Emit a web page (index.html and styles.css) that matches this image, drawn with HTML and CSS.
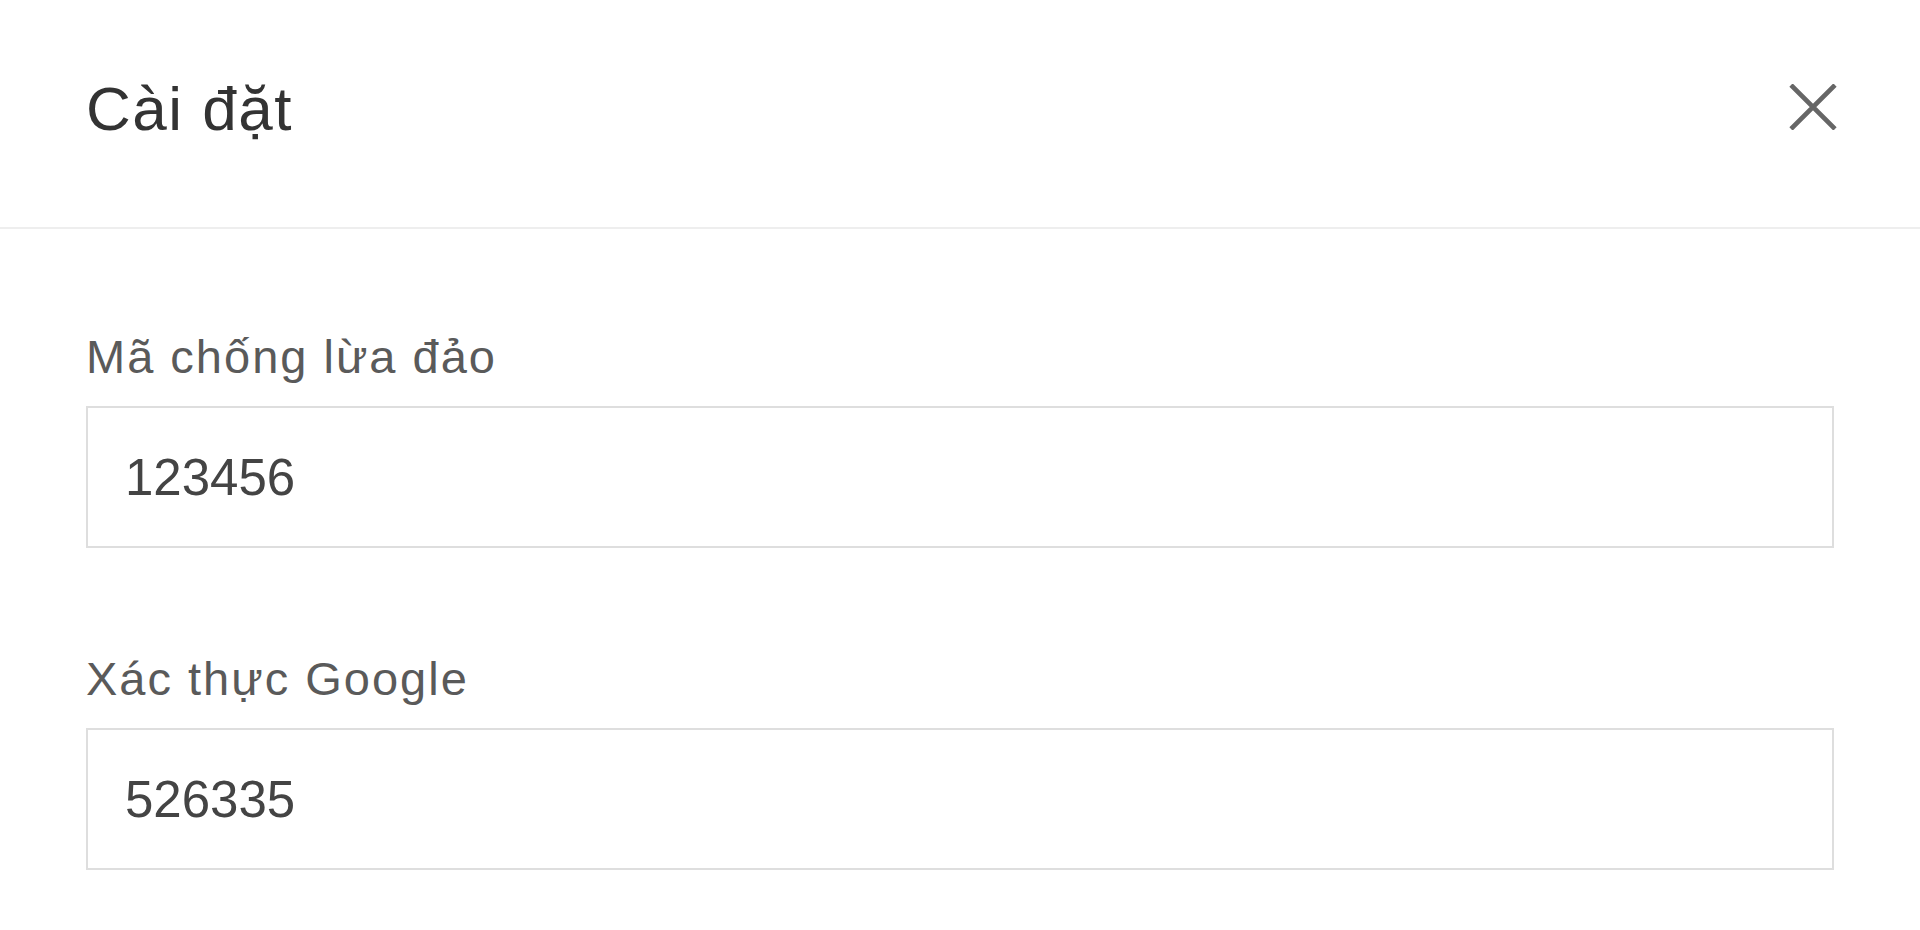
FILE: index.html
```html
<!DOCTYPE html>
<html lang="vi">
<head>
<meta charset="utf-8">
<title>Cài đặt</title>
<link rel="stylesheet" href="styles.css">
</head>
<body>
<div class="page">
  <header class="header">
    <h1 class="title">Cài đặt</h1>
    <button class="close" aria-label="Đóng">
      <svg width="48" height="46" viewBox="0 0 48 46" aria-hidden="true">
        <path d="M2 1 L46 45 M46 1 L2 45" stroke="#666" stroke-width="4.6" fill="none"/>
      </svg>
    </button>
  </header>
  <main class="form">
    <div class="field">
      <label class="label">Mã chống lừa đảo</label>
      <div class="input">123456</div>
    </div>
    <div class="field">
      <label class="label">Xác thực Google</label>
      <div class="input">526335</div>
    </div>
  </main>
</div>
</body>
</html>
```
FILE: styles.css
```css
* { box-sizing: border-box; }
html, body { margin: 0; padding: 0; background: #fff; }
body { font-family: "Liberation Sans", Arial, sans-serif; }

.page { width: 1920px; min-height: 930px; }

.header {
  height: 229px;
  border-bottom: 2px solid #eeeeee;
  padding: 0 83px 10px 86px;
  display: flex;
  align-items: center;
  justify-content: space-between;
}

.title {
  margin: 0;
  font-size: 62px;
  line-height: 70px;
  font-weight: normal;
  color: #333;
  letter-spacing: 1.5px;
}

.close {
  border: 0;
  background: none;
  padding: 0;
  width: 48px;
  height: 46px;
  display: flex;
  margin-top: -4px;
}

.form {
  padding: 104px 86px 0 86px;
  display: flex;
  flex-direction: column;
  gap: 107px;
}

.field {
  display: flex;
  flex-direction: column;
  gap: 25px;
}

.label {
  font-size: 47px;
  line-height: 48px;
  color: #5a5a5a;
  letter-spacing: 2px;
}

.input {
  height: 142px;
  border: 2px solid #dedede;
  padding: 0 37px;
  display: flex;
  align-items: center;
  font-size: 51px;
  color: #444;
}
```
